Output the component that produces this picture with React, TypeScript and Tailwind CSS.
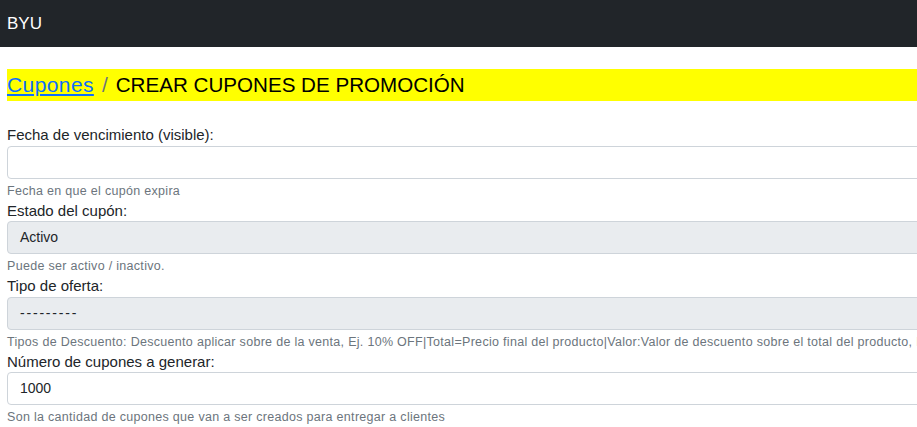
const fields = [
  { label: 'Fecha de vencimiento (visible):', value: '', disabled: false, help: 'Fecha en que el cupón expira' },
  { label: 'Estado del cupón:', value: 'Activo', disabled: true, help: 'Puede ser activo / inactivo.' },
  {
    label: 'Tipo de oferta:',
    value: '---------',
    disabled: true,
    help: 'Tipos de Descuento: Descuento aplicar sobre de la venta, Ej. 10% OFF|Total=Precio final del producto|Valor:Valor de descuento sobre el total del producto, Ej. $100 OFF',
  },
  { label: 'Número de cupones a generar:', value: '1000', disabled: false, help: 'Son la cantidad de cupones que van a ser creados para entregar a clientes' },
];

export default function App() {
  return (
    <div className="h-[427px] w-[917px] overflow-hidden bg-white font-['Liberation_Sans',Arial,sans-serif] text-[#212529]">
      <nav className="flex h-[47px] items-center bg-[#212529] px-[7px]">
        <span className="text-[17px] text-white">BYU</span>
      </nav>

      <div className="w-[1100px] px-[7px]">
        <h4 className="mt-[22px] flex h-[32px] items-center whitespace-nowrap bg-[#ffff00] text-[21px]">
          <a href="#" className="tracking-[0.4px] text-[#0d6efd] underline">
            Cupones
          </a>
          <span className="px-[8px] text-[#6c757d]">/</span>
          <span className="text-[20.6px] text-black">CREAR CUPONES DE PROMOCIÓN</span>
        </h4>

        <div className="mt-[23px]">
          {fields.map((f, i) => (
            <div key={i} className="flex flex-col">
              <label className="text-[15px] leading-[21.5px]">{f.label}</label>
              <div
                className={`flex h-[33px] items-center rounded-[4px] border border-[#ced4da] px-[12px] text-[14px] ${
                  f.disabled ? 'bg-[#e9ecef]' : 'bg-white'
                }`}
              >
                <span className={f.value.startsWith('-') ? 'tracking-[1.8px]' : ''}>{f.value}</span>
              </div>
              <div className="mt-[3px] whitespace-nowrap text-[12.5px] leading-[18px] tracking-[0.3px] text-[#6c757d]">
                {f.help}
              </div>
            </div>
          ))}
        </div>
      </div>
    </div>
  );
}
